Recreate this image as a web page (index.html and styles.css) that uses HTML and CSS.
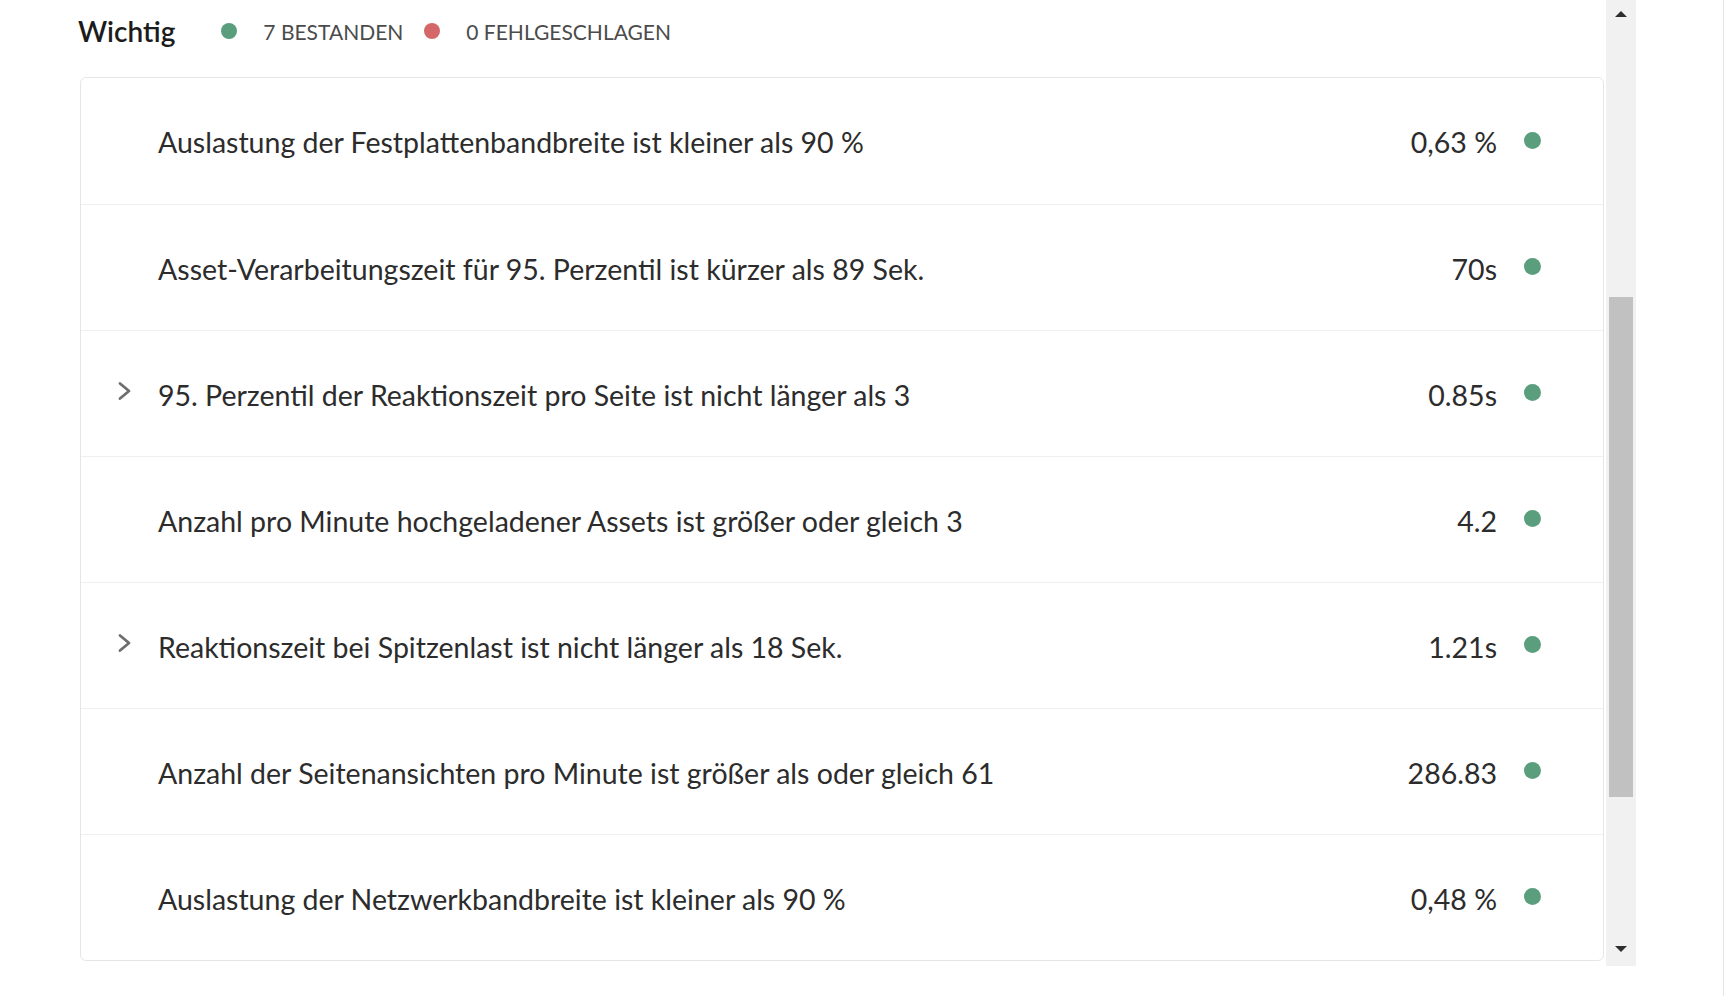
FILE: index.html
```html
<!DOCTYPE html>
<html lang="de">
<head>
<meta charset="utf-8">
<title>Wichtig</title>
<link rel="stylesheet" href="styles.css">
</head>
<body>
<div class="page">
  <main class="content">
    <header class="section-head">
      <h2 class="title">Wichtig</h2>
      <span class="stat"><i class="dot dot-pass"></i>7 BESTANDEN</span>
      <span class="stat stat-fail"><i class="dot dot-fail"></i>0 FEHLGESCHLAGEN</span>
    </header>
    <ul class="card">
      <li class="row">
        <span class="chev-slot"></span>
        <span class="label">Auslastung der Festplattenbandbreite ist kleiner als 90 %</span>
        <span class="value">0,63 %</span><i class="dot dot-pass status"></i>
      </li>
      <li class="row">
        <span class="chev-slot"></span>
        <span class="label">Asset-Verarbeitungszeit für 95. Perzentil ist kürzer als 89 Sek.</span>
        <span class="value">70s</span><i class="dot dot-pass status"></i>
      </li>
      <li class="row">
        <span class="chev-slot"><svg class="chev" width="16" height="20" viewBox="0 0 16 20"><polyline points="3,2.5 12,10 3,17.5" fill="none" stroke="#6e6e6e" stroke-width="2.8" stroke-linecap="round" stroke-linejoin="round"/></svg></span>
        <span class="label">95. Perzentil der Reaktionszeit pro Seite ist nicht länger als 3</span>
        <span class="value">0.85s</span><i class="dot dot-pass status"></i>
      </li>
      <li class="row">
        <span class="chev-slot"></span>
        <span class="label">Anzahl pro Minute hochgeladener Assets ist größer oder gleich 3</span>
        <span class="value">4.2</span><i class="dot dot-pass status"></i>
      </li>
      <li class="row">
        <span class="chev-slot"><svg class="chev" width="16" height="20" viewBox="0 0 16 20"><polyline points="3,2.5 12,10 3,17.5" fill="none" stroke="#6e6e6e" stroke-width="2.8" stroke-linecap="round" stroke-linejoin="round"/></svg></span>
        <span class="label">Reaktionszeit bei Spitzenlast ist nicht länger als 18 Sek.</span>
        <span class="value">1.21s</span><i class="dot dot-pass status"></i>
      </li>
      <li class="row">
        <span class="chev-slot"></span>
        <span class="label">Anzahl der Seitenansichten pro Minute ist größer als oder gleich 61</span>
        <span class="value">286.83</span><i class="dot dot-pass status"></i>
      </li>
      <li class="row">
        <span class="chev-slot"></span>
        <span class="label">Auslastung der Netzwerkbandbreite ist kleiner als 90 %</span>
        <span class="value">0,48 %</span><i class="dot dot-pass status"></i>
      </li>
    </ul>
  </main>
  <div class="scrollbar">
    <div class="sb-btn sb-up"><i class="tri tri-up"></i></div>
    <div class="sb-track"><div class="sb-thumb"></div></div>
    <div class="sb-btn sb-down"><i class="tri tri-down"></i></div>
  </div>
  <div class="gutter"></div>
</div>
</body>
</html>
```
FILE: styles.css
```css
* { box-sizing: border-box; }
html, body { margin: 0; padding: 0; background: #ffffff; }
body { font-family: Lato, "Open Sans", sans-serif; color: #2c2c2c; }

.page { display: flex; width: 1724px; height: 996px; }

.content { flex: 0 0 1606px; padding-left: 80px; padding-right: 2px; }

.section-head {
  height: 62px;
  display: flex;
  align-items: center;
  margin-left: -2px;
}
.title {
  margin: 0;
  font-size: 28px;
  font-weight: 600;
  color: #1c1c1c;
}
.stat {
  display: flex;
  align-items: center;
  font-size: 21px;
  color: #4b4b4b;
  margin-left: 46px;
}
.stat-fail { margin-left: 21px; }
.stat .dot { margin-right: 26px; }

.dot {
  display: inline-block;
  width: 16px;
  height: 16px;
  border-radius: 50%;
  flex: 0 0 auto;
}
.dot-pass { background: #5b9e7d; }
.dot-fail { background: #d46767; }

.card {
  list-style: none;
  margin: 15px 0 0 0;
  padding: 0;
  border: 1px solid #e6e6e6;
  border-radius: 6px;
}
.row {
  display: flex;
  align-items: center;
  height: 126px;
  padding: 2px 62px 0 37px;
  font-size: 28.5px;
}
.row + .row { border-top: 1px solid #efefef; height: 126px; }

.chev-slot { flex: 0 0 40px; display: flex; align-items: center; height: 20px; }
.chev { display: block; margin-top: -8px; margin-left: -1px; }

.label { flex: 1 1 auto; color: #2c2c2c; }
.value { color: #2c2c2c; text-align: right; }
.status { width: 17px; height: 17px; margin-left: 27px; margin-top: -4px; }

.scrollbar {
  flex: 0 0 30px;
  height: 966px;
  background: #f1f1f1;
  display: flex;
  flex-direction: column;
}
.sb-btn { display: flex; align-items: center; justify-content: center; }
.sb-up { height: 28px; }
.sb-down { height: 34px; }
.sb-track { flex: 1 1 auto; padding: 269px 3px 0 3px; }
.sb-thumb { height: 500px; background: #c1c1c1; }
.tri { display: block; width: 0; height: 0; border-left: 6px solid transparent; border-right: 6px solid transparent; }
.tri-up { border-bottom: 6px solid #2e2e2e; }
.tri-down { border-top: 6px solid #2e2e2e; }

.gutter { flex: 1 1 auto; border-right: 1px solid #e6e6e6; }
```
